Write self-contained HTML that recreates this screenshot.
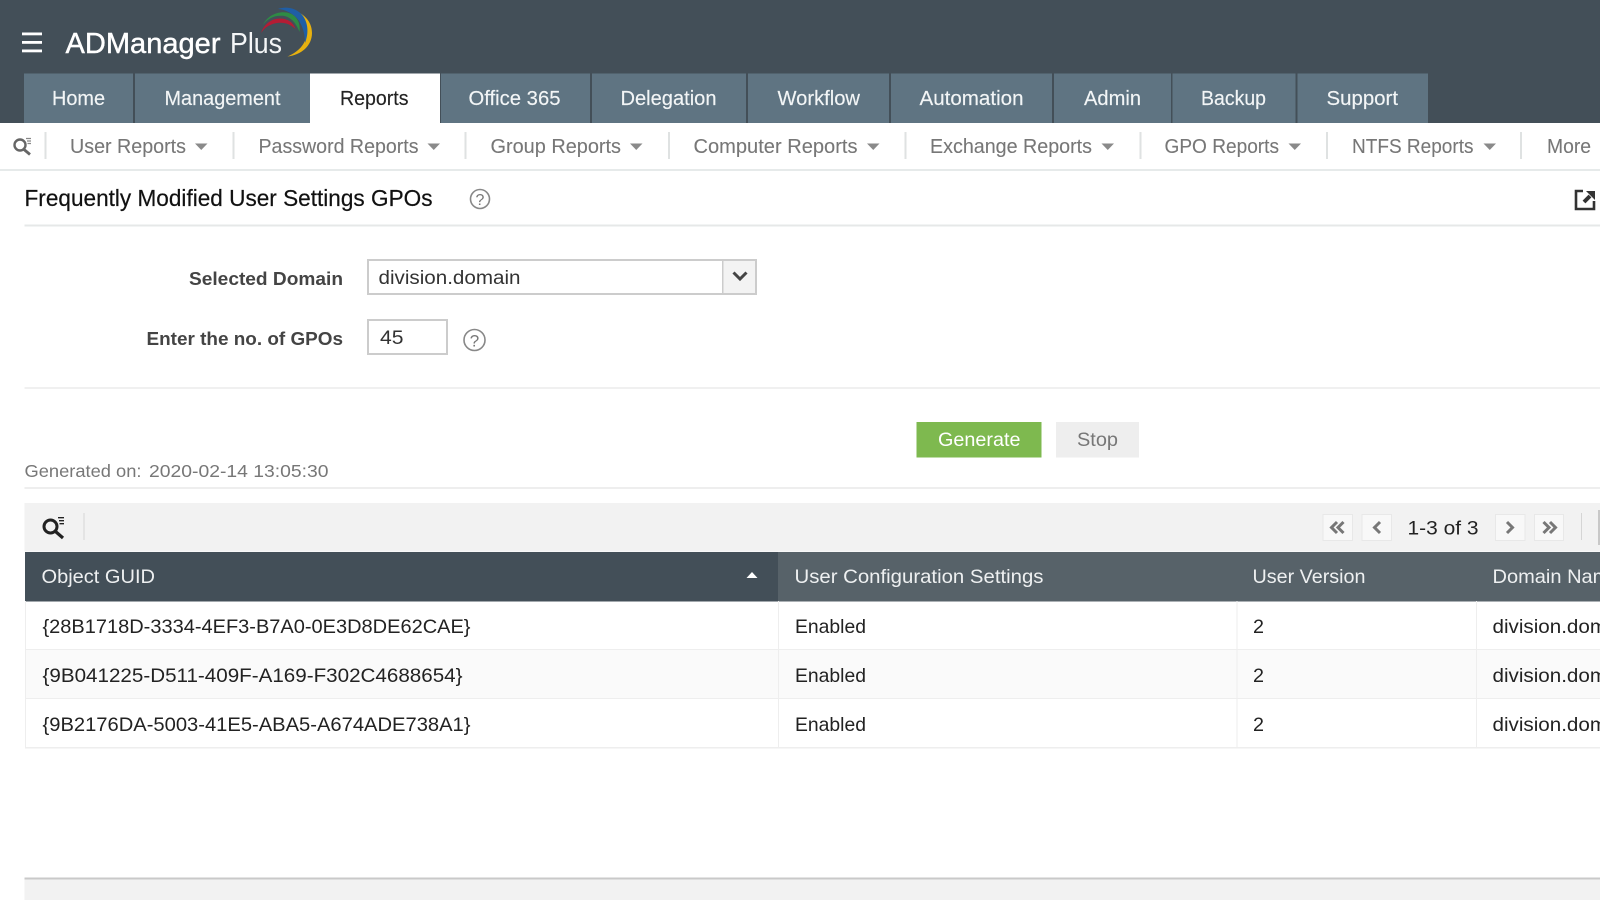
<!DOCTYPE html>
<html lang="en"><head><meta charset="utf-8"><title>ADManager Plus</title>
<style>
html,body{margin:0;padding:0;background:#fff;width:1600px;height:900px;overflow:hidden}
svg{display:block}
text{font-family:"Liberation Sans",Arial,sans-serif;white-space:pre}
.tab{font-size:20.5px;fill:#f2f5f6;stroke:#f2f5f6;stroke-width:.15px}
.sub{font-size:20px;fill:#777;stroke:#777;stroke-width:.1px}
.cell{font-size:19.5px;fill:#222}
.hd{font-size:19.5px;fill:#eef0f1}
.lb{font-size:18px;font-weight:bold;fill:#444}
</style></head><body>
<svg width="1600" height="900" viewBox="0 0 1600 900" xmlns="http://www.w3.org/2000/svg">
<rect width="1600" height="900" fill="#fff"/>
<!-- header -->
<rect width="1600" height="123" fill="#434f58"/>
<rect x="22" y="32.5" width="20" height="2.8" fill="#fff"/><rect x="22" y="41" width="20" height="2.8" fill="#fff"/><rect x="22" y="49.5" width="20" height="2.8" fill="#fff"/>
<text x="65.5" y="53" font-size="29" fill="#fff" stroke="#fff" stroke-width=".4" textLength="155" lengthAdjust="spacingAndGlyphs">ADManager</text>
<text x="230" y="53" font-size="29" fill="#f4f6f7" textLength="52" lengthAdjust="spacingAndGlyphs">Plus</text>
<path d="M298 12C308 17 312 25 312 33C312 46 301 55 287.5 56.5C298 52 306.5 44 306.5 33C306.5 25 303 17 298 12Z" fill="#e7b10f"/>
<path d="M278 9C286 6 297 8 303 16C308 23 309 33 305 43C305 31 301 21 294 15.5C289 11.5 284 9.5 278 9Z" fill="#1f5ea6"/>
<path d="M263 25C267 16 277 11 287 12.5C295 14 301 21 299.5 32C296 23 291 17 283 15.8C274 15 267 19 263 25Z" fill="#2e8b45"/>
<path d="M261 33C264 24 272 18 281 18.5C288 19 293 22 295.5 29C290 24 285 22.5 279 22.8C271 23.5 265 27 261 33Z" fill="#b41c34"/>
<!-- tabs -->
<g fill="#5f7482">
<rect x="24" y="73.5" width="109" height="49.5"/><rect x="135" y="73.5" width="175" height="49.5"/>
<rect x="441" y="73.5" width="149" height="49.5"/><rect x="592" y="73.5" width="154" height="49.5"/><rect x="748" y="73.5" width="141" height="49.5"/><rect x="891" y="73.5" width="161" height="49.5"/><rect x="1054" y="73.5" width="117" height="49.5"/><rect x="1172.5" y="73.5" width="123" height="49.5"/><rect x="1297.5" y="73.5" width="130.5" height="49.5"/>
</g>
<rect x="310" y="73.5" width="130" height="49.5" fill="#fff"/>
<text class="tab" x="52" y="105" textLength="53" lengthAdjust="spacingAndGlyphs">Home</text>
<text class="tab" x="164.5" y="105" textLength="116" lengthAdjust="spacingAndGlyphs">Management</text>
<text class="tab" x="340" y="105" textLength="68.5" lengthAdjust="spacingAndGlyphs" style="fill:#222;stroke:#222">Reports</text>
<text class="tab" x="468.5" y="105" textLength="92" lengthAdjust="spacingAndGlyphs">Office 365</text>
<text class="tab" x="620.5" y="105" textLength="96" lengthAdjust="spacingAndGlyphs">Delegation</text>
<text class="tab" x="777.5" y="105" textLength="82.5" lengthAdjust="spacingAndGlyphs">Workflow</text>
<text class="tab" x="919.5" y="105" textLength="104" lengthAdjust="spacingAndGlyphs">Automation</text>
<text class="tab" x="1084" y="105" textLength="57" lengthAdjust="spacingAndGlyphs">Admin</text>
<text class="tab" x="1201" y="105" textLength="65" lengthAdjust="spacingAndGlyphs">Backup</text>
<text class="tab" x="1326.5" y="105" textLength="71.5" lengthAdjust="spacingAndGlyphs">Support</text>
<!-- subnav -->
<rect x="0" y="169" width="1600" height="2" fill="#e6eaea"/>
<g fill="none" stroke="#666"><circle cx="20" cy="145" r="5.5" stroke-width="2.4"/><path d="M24 149.5L30 154.5" stroke-width="2.8"/><path d="M26 138.5H31M27 141H31M27.5 143.5H31" stroke-width="1.2" stroke="#888"/></g>
<g fill="#dfe2e2"><rect x="44.5" y="132" width="2" height="27"/><rect x="232.5" y="132" width="2" height="27"/><rect x="464.5" y="132" width="2" height="27"/><rect x="668" y="132" width="2" height="27"/><rect x="904.5" y="132" width="2" height="27"/><rect x="1139.5" y="132" width="2" height="27"/><rect x="1326" y="132" width="2" height="27"/><rect x="1520" y="132" width="2" height="27"/></g>
<text class="sub" x="70" y="153" textLength="116" lengthAdjust="spacingAndGlyphs">User Reports</text>
<text class="sub" x="258.5" y="153" textLength="160" lengthAdjust="spacingAndGlyphs">Password Reports</text>
<text class="sub" x="490.5" y="153" textLength="130.5" lengthAdjust="spacingAndGlyphs">Group Reports</text>
<text class="sub" x="693.5" y="153" textLength="164" lengthAdjust="spacingAndGlyphs">Computer Reports</text>
<text class="sub" x="930" y="153" textLength="162" lengthAdjust="spacingAndGlyphs">Exchange Reports</text>
<text class="sub" x="1164.5" y="153" textLength="114.5" lengthAdjust="spacingAndGlyphs">GPO Reports</text>
<text class="sub" x="1352" y="153" textLength="121.5" lengthAdjust="spacingAndGlyphs">NTFS Reports</text>
<text class="sub" x="1547" y="153" textLength="44" lengthAdjust="spacingAndGlyphs">More</text>
<g fill="#8a8a8a"><path d="M195 143.5h12.5l-6.25 6.500z"/><path d="M427.500 143.5h12.5l-6.25 6.500z"/><path d="M630 143.5h12.5l-6.25 6.500z"/><path d="M867 143.5h12.5l-6.25 6.500z"/><path d="M1101.5 143.5h12.5l-6.25 6.500z"/><path d="M1288.500 143.5h12.5l-6.25 6.500z"/><path d="M1483.500 143.5h12.5l-6.25 6.500z"/></g>
<!-- title -->
<text x="24.5" y="206" font-size="23.5" fill="#111" stroke="#111" stroke-width=".2" textLength="408" lengthAdjust="spacingAndGlyphs">Frequently Modified User Settings GPOs</text>
<circle cx="480" cy="199" r="9.500" fill="none" stroke="#888" stroke-width="1.600"/>
<text x="480" y="205" font-size="16" fill="#777" text-anchor="middle">?</text>
<path d="M1583 191H1576V209H1594V201" fill="none" stroke="#333" stroke-width="2.600"/>
<path d="M1584 202L1590 196" stroke="#333" stroke-width="4" fill="none"/><path d="M1586 191H1595V200Z" fill="#333"/>
<rect x="24.5" y="224.5" width="1576" height="2" fill="#e6e8e8"/>
<!-- form -->
<text class="lb" x="189" y="285" textLength="154" lengthAdjust="spacingAndGlyphs">Selected Domain</text>
<rect x="722" y="260" width="34" height="34" fill="#f3f3f3"/>
<rect x="368" y="260" width="388" height="34" fill="none" stroke="#ccc" stroke-width="2"/>
<rect x="722" y="260" width="1.5" height="34" fill="#ccc"/>
<path d="M733.500 272.500L740 279L746.500 272.500" fill="none" stroke="#444" stroke-width="3"/>
<text x="378.5" y="284" font-size="19" fill="#333" textLength="142" lengthAdjust="spacingAndGlyphs">division.domain</text>
<text class="lb" x="146.5" y="345" textLength="196.5" lengthAdjust="spacingAndGlyphs">Enter the no. of GPOs</text>
<rect x="368" y="320" width="79" height="34" fill="#fff" stroke="#ccc" stroke-width="2"/>
<text x="380" y="344" font-size="19" fill="#333" textLength="23.5" lengthAdjust="spacingAndGlyphs">45</text>
<circle cx="474.500" cy="340" r="10.500" fill="none" stroke="#888" stroke-width="1.600"/>
<text x="474.500" y="346.500" font-size="17" fill="#777" text-anchor="middle">?</text>
<rect x="24.5" y="387" width="1576" height="2" fill="#f0f0f0"/>
<!-- buttons -->
<rect x="916.500" y="422" width="125" height="35.500" fill="#7eb94f"/>
<text x="938" y="446" font-size="19.5" fill="#fff" textLength="82.5" lengthAdjust="spacingAndGlyphs">Generate</text>
<rect x="1056" y="422" width="83" height="35.500" fill="#eeeeee"/>
<text x="1077" y="446" font-size="19.5" fill="#777" textLength="41" lengthAdjust="spacingAndGlyphs">Stop</text>
<text x="24.5" y="477" font-size="17.5" fill="#777" textLength="117" lengthAdjust="spacingAndGlyphs">Generated on:</text>
<text x="149" y="477" font-size="17.5" fill="#777" textLength="179.5" lengthAdjust="spacingAndGlyphs">2020-02-14 13:05:30</text>
<rect x="24.5" y="487" width="1576" height="2" fill="#eeeeee"/>
<!-- toolbar -->
<rect x="24.5" y="503" width="1576" height="48.5" fill="#f2f2f2"/>
<g fill="none" stroke="#222"><circle cx="50.5" cy="526.500" r="6.500" stroke-width="3"/><path d="M55.5 531.5L63 538" stroke-width="3.200"/><path d="M58 517.700H64M59 520.700H64M59.500 523.700H64" stroke-width="1.300"/></g>
<rect x="83.5" y="513" width="1" height="27" fill="#d5d5d5"/>
<g fill="#f8f8f8" stroke="#e8e8e8"><rect x="1323" y="514.5" width="29.5" height="26"/><rect x="1362" y="514.5" width="29.5" height="26"/><rect x="1495.500" y="514.5" width="29.5" height="26"/><rect x="1534.500" y="514.5" width="29" height="26"/></g>
<g fill="none" stroke="#777" stroke-width="3"><path d="M1337 522L1331.500 527.500L1337 533M1343.500 522L1338 527.500L1343.500 533"/><path d="M1380 522L1374.500 527.500L1380 533"/><path d="M1507 522L1512.500 527.500L1507 533"/><path d="M1543.500 522L1549 527.500L1543.500 533M1550 522L1555.500 527.500L1550 533"/></g>
<text x="1407.500" y="534.500" font-size="19" fill="#222" textLength="71" lengthAdjust="spacingAndGlyphs">1-3 of 3</text>
<rect x="1581" y="513" width="1" height="27" fill="#d5d5d5"/>
<rect x="1598" y="510" width="2" height="35" fill="#c8c8c8"/>
<!-- table header -->
<rect x="25" y="552" width="1575" height="49.500" fill="#576269"/>
<rect x="25" y="552" width="753" height="49.500" fill="#434f58"/>
<text class="hd" x="41.500" y="583" textLength="113.500" lengthAdjust="spacingAndGlyphs">Object GUID</text>
<path d="M746.500 578H757.500L752 572Z" fill="#fff"/>
<text class="hd" x="794.500" y="583" textLength="249" lengthAdjust="spacingAndGlyphs">User Configuration Settings</text>
<text class="hd" x="1252.500" y="583" textLength="113" lengthAdjust="spacingAndGlyphs">User Version</text>
<text class="hd" x="1492.500" y="583" textLength="128" lengthAdjust="spacingAndGlyphs">Domain Name</text>
<!-- rows -->
<rect x="25" y="650" width="1575" height="48.500" fill="#fafafa"/>
<g fill="#eeeeee"><rect x="25" y="649" width="1575" height="1"/><rect x="25" y="698" width="1575" height="1"/><rect x="25" y="747" width="1575" height="1.500"/><rect x="25" y="601" width="1" height="147"/><rect x="778" y="601" width="1" height="147"/><rect x="1236.500" y="601" width="1" height="147"/><rect x="1476" y="601" width="1" height="147"/></g>
<text class="cell" x="42.500" y="633" textLength="428" lengthAdjust="spacingAndGlyphs">{28B1718D-3334-4EF3-B7A0-0E3D8DE62CAE}</text>
<text class="cell" x="795" y="633" textLength="71" lengthAdjust="spacingAndGlyphs">Enabled</text>
<text class="cell" x="1253" y="633" textLength="11" lengthAdjust="spacingAndGlyphs">2</text>
<text class="cell" x="1492.500" y="633" textLength="142" lengthAdjust="spacingAndGlyphs">division.domain</text>
<text class="cell" x="42.500" y="682" textLength="420" lengthAdjust="spacingAndGlyphs">{9B041225-D511-409F-A169-F302C4688654}</text>
<text class="cell" x="795" y="682" textLength="71" lengthAdjust="spacingAndGlyphs">Enabled</text>
<text class="cell" x="1253" y="682" textLength="11" lengthAdjust="spacingAndGlyphs">2</text>
<text class="cell" x="1492.500" y="682" textLength="142" lengthAdjust="spacingAndGlyphs">division.domain</text>
<text class="cell" x="42.500" y="731" textLength="428" lengthAdjust="spacingAndGlyphs">{9B2176DA-5003-41E5-ABA5-A674ADE738A1}</text>
<text class="cell" x="795" y="731" textLength="71" lengthAdjust="spacingAndGlyphs">Enabled</text>
<text class="cell" x="1253" y="731" textLength="11" lengthAdjust="spacingAndGlyphs">2</text>
<text class="cell" x="1492.500" y="731" textLength="142" lengthAdjust="spacingAndGlyphs">division.domain</text>
<!-- footer -->
<rect x="24.5" y="877.500" width="1576" height="22.500" fill="#f2f2f2"/>
<rect x="24.5" y="877.500" width="1576" height="2" fill="#c9c9c9"/>
</svg>
</body></html>
